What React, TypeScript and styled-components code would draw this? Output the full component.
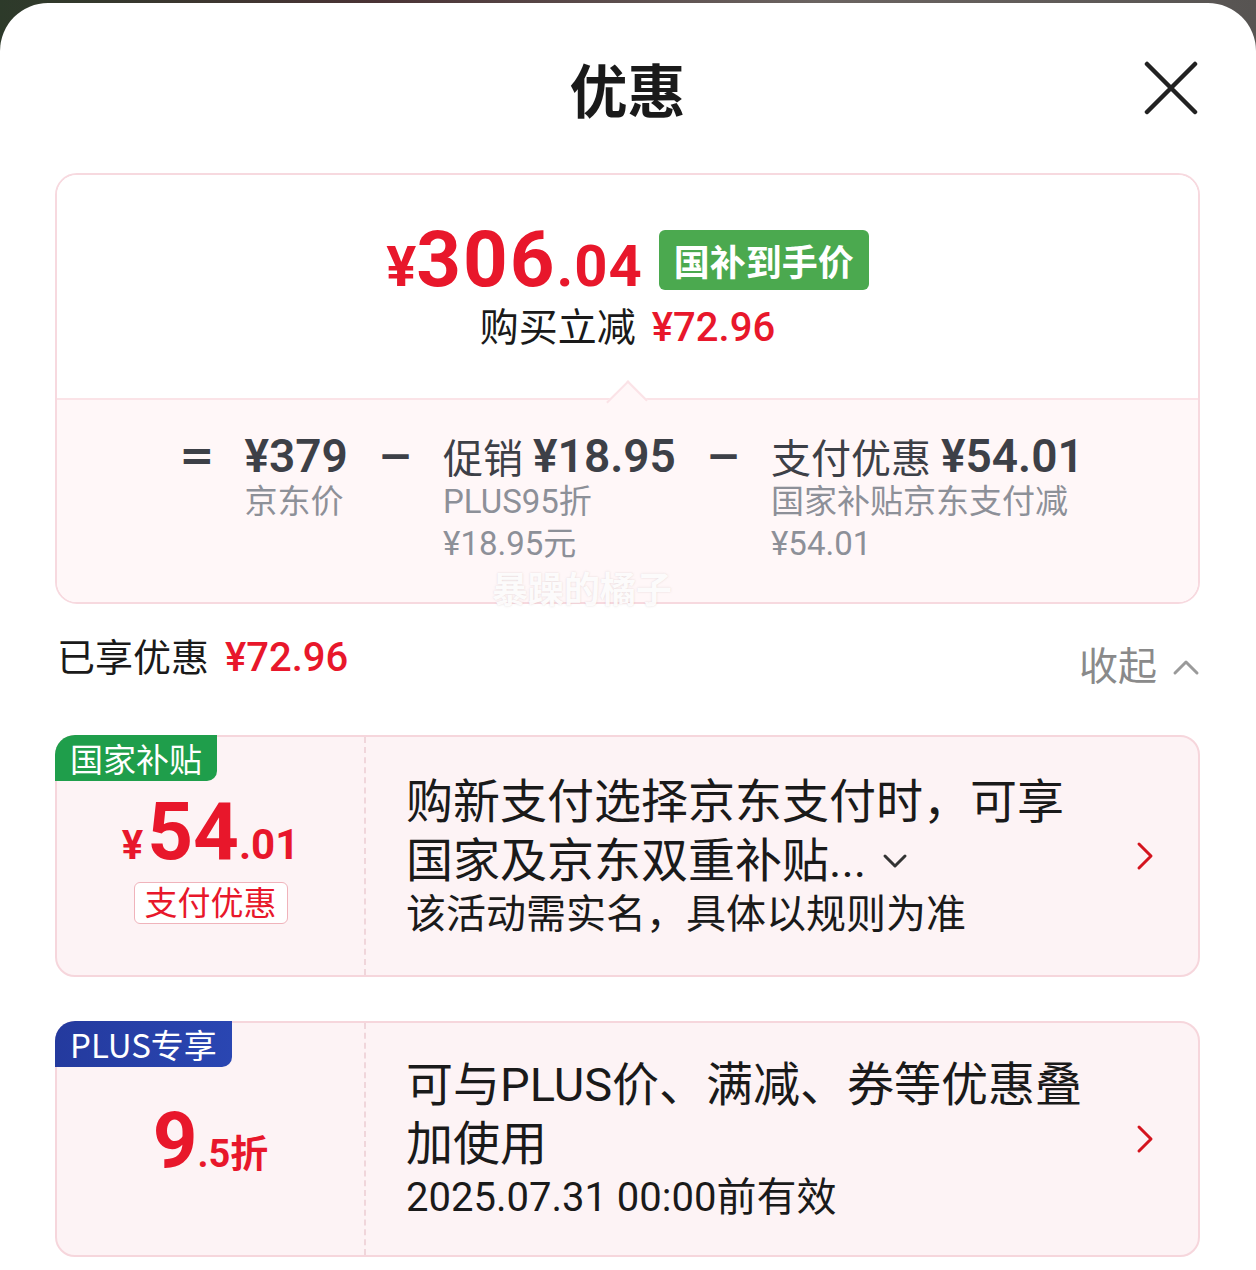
import React from "react";
import styled, { createGlobalStyle } from "styled-components";

const RED = "#e8172b";

const GlobalStyle = createGlobalStyle`
  html, body { margin: 0; padding: 0; }
  body {
    width: 1256px;
    min-height: 1270px;
    background: linear-gradient(90deg, #2d3a2a 0%, #4a3335 30%, #6b6461 65%, #575452 100%);
    font-family: Roboto, "Noto Sans CJK SC", "Noto Sans", sans-serif;
    -webkit-font-smoothing: antialiased;
  }
  * { box-sizing: border-box; }
`;

const Sheet = styled.div`
  margin-top: 3px;
  min-height: 1267px;
  background: #fff;
  border-radius: 48px 48px 0 0;
  padding: 0 56px 0 55px;
`;

const Header = styled.header`
  display: grid;
  grid-template-columns: 1fr auto 1fr;
  align-items: center;
  height: 170px;
`;

const Title = styled.h1`
  grid-column: 2;
  margin: 0;
  font-family: "Noto Sans CJK SC", sans-serif;
  font-size: 58px;
  font-weight: 700;
  line-height: 1;
  color: #1a1a1a;
`;

const CloseButton = styled.button`
  grid-column: 3;
  justify-self: end;
  margin: 0 1px 0 0;
  padding: 0;
  width: 56px;
  height: 56px;
  border: none;
  background: transparent;
  display: flex;
  align-items: center;
  justify-content: center;
`;

const SummaryCard = styled.section`
  position: relative;
  border: 2px solid #f7d9df;
  border-radius: 22px;
  display: flex;
  flex-direction: column;
`;

const SummaryTop = styled.div`
  height: 223px;
  display: flex;
  flex-direction: column;
  align-items: center;
  padding-top: 55px;
  background: #fff;
  border-radius: 20px 20px 0 0;
`;

const PriceRow = styled.div`
  display: flex;
  align-items: center;
  height: 60px;
`;

const BigPrice = styled.div`
  display: flex;
  align-items: baseline;
  color: ${RED};
  font-family: Roboto, sans-serif;
  font-weight: 700;
  line-height: 1;
`;

const PricePart = styled.span<{ $size: number; $spacing?: number }>`
  font-size: ${(p) => p.$size}px;
  letter-spacing: ${(p) => p.$spacing ?? 0}px;
`;

const GreenBadge = styled.span`
  margin-left: 16px;
  height: 60px;
  padding: 0 15px;
  display: flex;
  align-items: center;
  background: #4ba94f;
  border-radius: 6px;
  color: #fff;
  font-family: "Noto Sans CJK SC", sans-serif;
  font-size: 36px;
  font-weight: 700;
`;

const SubLine = styled.div`
  margin-top: 14px;
  display: flex;
  align-items: center;
  line-height: 48px;
  font-size: 39px;
  color: #1a1a1a;
`;

const RedAmount = styled.span<{ $size?: number }>`
  color: ${RED};
  font-family: Roboto, sans-serif;
  font-weight: 500;
  font-size: ${(p) => p.$size ?? 38}px;
  margin-left: 16px;
`;

const SummaryBottom = styled.div`
  position: relative;
  height: 204px;
  background: #fff7f8;
  border-top: 2px solid #fbe3e7;
  border-radius: 0 0 20px 20px;
  padding-top: 31px;

  &::before {
    content: "";
    position: absolute;
    left: 556px;
    top: -13px;
    width: 26px;
    height: 26px;
    background: #fff7f8;
    border-left: 2px solid #fbe3e7;
    border-top: 2px solid #fbe3e7;
    transform: rotate(45deg) scaleY(1.1);
  }
`;

const Breakdown = styled.div`
  display: flex;
  justify-content: center;
  align-items: flex-start;
  gap: 30px;
  padding-left: 8px;
`;

const Operator = styled.span`
  font-family: "DejaVu Sans", sans-serif;
  font-weight: 700;
  font-size: 42px;
  line-height: 50px;
  color: #3d4047;
`;

const Term = styled.div`
  display: flex;
  flex-direction: column;
`;

const TermMain = styled.div`
  display: flex;
  align-items: center;
  height: 50px;
  color: #3d4047;
  font-size: 40px;
`;

const TermAmount = styled.span<{ $gap?: boolean }>`
  font-family: Roboto, sans-serif;
  font-weight: 600;
  font-size: 46px;
  margin-left: ${(p) => (p.$gap ? "10px" : "0")};
`;

const TermSub = styled.div`
  font-size: 33px;
  line-height: 42px;
  color: #8d9098;
`;

const Watermark = styled.span`
  position: absolute;
  left: 435px;
  bottom: -3px;
  line-height: 36px;
  font-family: "Noto Sans CJK SC", sans-serif;
  font-size: 36px;
  font-weight: 700;
  color: rgba(255, 255, 255, 0.92);
  text-shadow: 0 0 2px rgba(170, 150, 150, 0.35);
  pointer-events: none;
`;

const SectionHead = styled.div`
  display: flex;
  justify-content: space-between;
  align-items: flex-start;
  padding-top: 30px;
`;

const SectionTitle = styled.div`
  display: flex;
  align-items: center;
  line-height: 48px;
  font-size: 38px;
  color: #1a1a1a;
  padding-left: 2px;
`;

const Collapse = styled.div`
  margin-top: 9px;
  display: flex;
  align-items: center;
  gap: 15px;
  line-height: 48px;
  font-size: 39px;
  color: #8a8a8a;
`;

const CouponList = styled.div`
  margin-top: 44px;
  display: flex;
  flex-direction: column;
  gap: 44px;
`;

const CouponCard = styled.article<{ $height: number }>`
  position: relative;
  height: ${(p) => p.$height}px;
  display: grid;
  grid-template-columns: 309px 1fr;
  background: #fdf3f5;
  border: 2px solid #f6d6dc;
  border-radius: 20px;
`;

const CornerTag = styled.span<{ $tone: "green" | "blue" }>`
  position: absolute;
  top: -2px;
  left: -2px;
  height: 46px;
  padding: 0 15px;
  display: flex;
  align-items: center;
  border-radius: 20px 0 10px 0;
  background: ${(p) =>
    p.$tone === "green" ? "#1f9e4b" : "linear-gradient(90deg, #243a9e, #2a46b2)"};
  color: #fff;
  font-family: "Noto Sans CJK SC", sans-serif;
  font-size: 33px;
  line-height: 1;
`;

const CouponLeft = styled.div`
  border-right: 2px dashed #f0d6db;
  display: flex;
  flex-direction: column;
  align-items: center;
  justify-content: center;
  padding-top: 4px;
`;

const CouponValue = styled.div`
  display: flex;
  align-items: baseline;
  color: ${RED};
  font-family: Roboto, "Noto Sans CJK SC", sans-serif;
  font-weight: 700;
  line-height: 1;
`;

const ValuePart = styled.span<{ $size: number; $gap?: number }>`
  font-size: ${(p) => p.$size}px;
  margin-right: ${(p) => p.$gap ?? 0}px;
`;

const OutlineTag = styled.span`
  margin-top: 10px;
  height: 42px;
  padding: 0 10px;
  display: flex;
  align-items: center;
  border: 1.5px solid #f0b3bb;
  border-radius: 6px;
  background: #fff;
  color: ${RED};
  font-size: 33px;
  line-height: 1;
`;

const CouponRight = styled.div`
  display: flex;
  align-items: center;
  padding: 0 44px 0 40px;
`;

const CouponText = styled.div`
  flex: 1;
  display: flex;
  flex-direction: column;
`;

const CouponMain = styled.div`
  font-size: 47px;
  line-height: 59px;
  color: #1a1a1a;
`;

const MainLine = styled.div`
  display: flex;
  align-items: center;
`;

const InlineIcon = styled.span`
  margin-left: 16px;
  display: flex;
`;

const CouponSub = styled.div`
  font-size: 40px;
  line-height: 50px;
  color: #1a1a1a;
`;

const Chevron = ({ dir, color, w, h, sw }: { dir: "up" | "down" | "right"; color: string; w: number; h: number; sw: number }) => {
  const pts =
    dir === "right"
      ? `${sw},${sw} ${w - sw},${h / 2} ${sw},${h - sw}`
      : dir === "up"
      ? `${sw},${h - sw} ${w / 2},${sw} ${w - sw},${h - sw}`
      : `${sw},${sw} ${w / 2},${h - sw} ${w - sw},${sw}`;
  return (
    <svg width={w} height={h} viewBox={`0 0 ${w} ${h}`} fill="none">
      <polyline points={pts} stroke={color} strokeWidth={sw} strokeLinecap="round" strokeLinejoin="round" />
    </svg>
  );
};

export default function App() {
  return (
    <>
      <GlobalStyle />
      <Sheet>
        <Header>
          <Title>优惠</Title>
          <CloseButton aria-label="关闭">
            <svg width="54" height="54" viewBox="0 0 54 54">
              <path d="M3 3 L51 51 M51 3 L3 51" stroke="#222" strokeWidth="4.5" strokeLinecap="round" />
            </svg>
          </CloseButton>
        </Header>

        <SummaryCard>
          <SummaryTop>
            <PriceRow>
              <BigPrice>
                <PricePart $size={56}>¥</PricePart>
                <PricePart $size={78} $spacing={2}>306</PricePart>
                <PricePart $size={58} $spacing={1}>.04</PricePart>
              </BigPrice>
              <GreenBadge>国补到手价</GreenBadge>
            </PriceRow>
            <SubLine>
              购买立减<RedAmount $size={40}>¥72.96</RedAmount>
            </SubLine>
          </SummaryTop>
          <SummaryBottom>
            <Breakdown>
              <Operator>=</Operator>
              <Term>
                <TermMain>
                  <TermAmount>¥379</TermAmount>
                </TermMain>
                <TermSub>京东价</TermSub>
              </Term>
              <Operator>−</Operator>
              <Term>
                <TermMain>
                  促销<TermAmount $gap>¥18.95</TermAmount>
                </TermMain>
                <TermSub>PLUS95折</TermSub>
                <TermSub>¥18.95元</TermSub>
              </Term>
              <Operator>−</Operator>
              <Term>
                <TermMain>
                  支付优惠<TermAmount $gap>¥54.01</TermAmount>
                </TermMain>
                <TermSub>国家补贴京东支付减</TermSub>
                <TermSub>¥54.01</TermSub>
              </Term>
            </Breakdown>
          </SummaryBottom>
          <Watermark>暴躁的橘子</Watermark>
        </SummaryCard>

        <SectionHead>
          <SectionTitle>
            已享优惠<RedAmount $size={40}>¥72.96</RedAmount>
          </SectionTitle>
          <Collapse>
            收起
            <Chevron dir="up" color="#9a9a9a" w={28} h={17} sw={3} />
          </Collapse>
        </SectionHead>

        <CouponList>
          <CouponCard $height={242}>
            <CornerTag $tone="green">国家补贴</CornerTag>
            <CouponLeft>
              <CouponValue>
                <ValuePart $size={40} $gap={4}>¥</ValuePart>
                <ValuePart $size={80}>54</ValuePart>
                <ValuePart $size={42}>.01</ValuePart>
              </CouponValue>
              <OutlineTag>支付优惠</OutlineTag>
            </CouponLeft>
            <CouponRight>
              <CouponText>
                <CouponMain>
                  <MainLine>购新支付选择京东支付时，可享</MainLine>
                  <MainLine>
                    国家及京东双重补贴...
                    <InlineIcon>
                      <Chevron dir="down" color="#333" w={26} h={16} sw={3} />
                    </InlineIcon>
                  </MainLine>
                </CouponMain>
                <CouponSub>该活动需实名，具体以规则为准</CouponSub>
              </CouponText>
              <Chevron dir="right" color="#d4141e" w={18} h={30} sw={3} />
            </CouponRight>
          </CouponCard>

          <CouponCard $height={236}>
            <CornerTag $tone="blue">PLUS专享</CornerTag>
            <CouponLeft>
              <CouponValue>
                <ValuePart $size={78}>9</ValuePart>
                <ValuePart $size={38}>.5折</ValuePart>
              </CouponValue>
            </CouponLeft>
            <CouponRight>
              <CouponText>
                <CouponMain>
                  <MainLine>可与PLUS价、满减、券等优惠叠</MainLine>
                  <MainLine>加使用</MainLine>
                </CouponMain>
                <CouponSub>2025.07.31 00:00前有效</CouponSub>
              </CouponText>
              <Chevron dir="right" color="#d4141e" w={18} h={30} sw={3} />
            </CouponRight>
          </CouponCard>
        </CouponList>
      </Sheet>
    </>
  );
}
